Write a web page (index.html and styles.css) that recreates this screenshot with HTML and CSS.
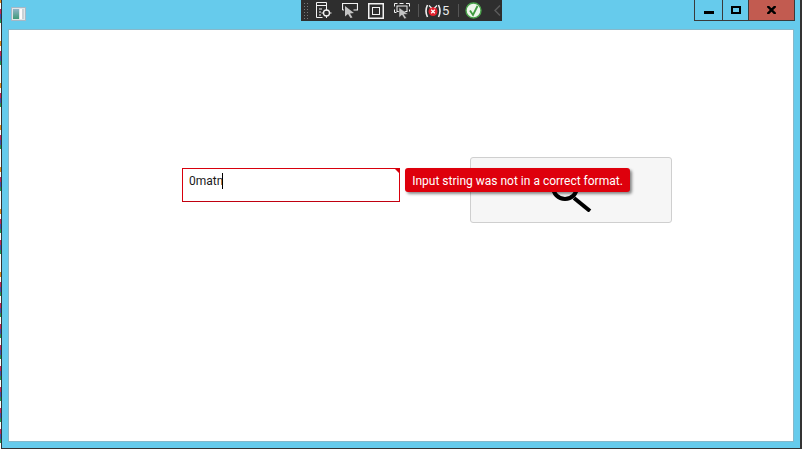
FILE: index.html
```html
<!DOCTYPE html>
<html lang="en">
<head>
<meta charset="utf-8">
<title>Validation window</title>
<link rel="stylesheet" href="styles.css">
</head>
<body>
<div class="window">
  <div class="strip">
    <i class="lead"></i>
    <i class="c"></i><i class="o"></i><i class="c"></i><i class="o"></i><i class="c"></i><i class="o"></i>
    <i class="c"></i><i class="o"></i><i class="c"></i><i class="o"></i><i class="c"></i><i class="c"></i>
    <i class="o"></i><i class="c"></i><i class="c"></i><i class="c"></i><i class="c"></i><i class="c"></i>
    <i class="c"></i><i class="c"></i><i class="c"></i>
  </div>
  <div class="frame">
    <header class="titlebar">
      <svg class="app-icon" width="15" height="14" viewBox="0 0 15 14">
        <defs>
          <linearGradient id="pane" x1="0" y1="0" x2="0" y2="1">
            <stop offset="0" stop-color="#8fb4c8"/>
            <stop offset="1" stop-color="#3f9a78"/>
          </linearGradient>
        </defs>
        <rect x="0.500" y="0.500" width="14" height="13" fill="#dfe6e8" stroke="#a5b8c6"/>
        <rect x="2" y="2" width="6" height="10" fill="url(#pane)"/>
        <rect x="9" y="2" width="2" height="10" fill="#fbfbfb"/>
        <rect x="11" y="2" width="2" height="10" fill="#c9d2d6"/>
      </svg>
      <div class="toolbar">
        <div class="grip"></div>
        <svg class="tool t1" width="16" height="17" viewBox="0 0 16 17" fill="none" stroke="#f2f2f2">
          <path d="M.5 15.500V.5h10v6M.5 15.500h6M.5 3.500h10"/>
          <path d="M3 7h3M3 10h2M3 13h2"/>
          <circle cx="10.500" cy="11" r="3" stroke-width="1.300"/>
          <path d="M10.500 6v2.500M10.500 13.500V16M5.500 11H8M13 11h2.500"/>
        </svg>
        <svg class="tool t2" width="16" height="15" viewBox="0 0 16 15" fill="none" stroke="#f2f2f2">
          <path d="M.5 7V.5h15V7h-4" stroke-width="1.200"/>
          <path d="M3 3l9 7-4 .5 2.500 4-2 .5-2.500-4-3 2.500z" fill="#c4c4c4" stroke="none"/>
          <path d="M.5 7H2"/>
        </svg>
        <svg class="tool t3" width="16" height="16" viewBox="0 0 16 16" fill="none" stroke="#f2f2f2">
          <rect x="0.750" y="0.750" width="14.500" height="14.500" stroke-width="1.500"/>
          <rect x="4.500" y="4.500" width="7" height="7"/>
        </svg>
        <svg class="tool t4" width="17" height="16" viewBox="0 0 17 16" fill="none" stroke="#f2f2f2">
          <path d="M3.500.5H.5v3M12 .5h3.500v3M.5 6.500v3h2M15.500 6.500v2M5.500 .5h4"/>
          <rect x="3" y="3" width="10" height="5.500"/>
          <path d="M5 4.500l9 6.500-4 .5 2.500 3.500-2 1-2.500-4-3 2.500z" fill="#c4c4c4" stroke="#2e2e2e" stroke-width="0.500"/>
        </svg>
        <div class="sep sep-a"></div>
        <div class="errors">
          <svg width="16" height="14" viewBox="0 0 16 14" fill="none">
            <circle cx="8" cy="7.500" r="4.500" fill="#e0202c"/>
            <path d="M6.200 5.700l3.600 3.600M9.800 5.700l-3.600 3.600" stroke="#fff" stroke-width="1.300"/>
            <path d="M2.500 1Q-.5 7 2.500 13M13.500 1Q16.500 7 13.500 13" stroke="#f0f0f0" stroke-width="1.600"/>
            <path d="M4 1.500l2.500 2.500M12 1.500L9.500 4" stroke="#f0f0f0" stroke-width="1.200"/>
          </svg>
          <span class="count">5</span>
        </div>
        <div class="sep sep-b"></div>
        <svg class="check" width="17" height="17" viewBox="0 0 17 17" fill="none">
          <circle cx="8.500" cy="8.500" r="7.500" fill="#eef6ec" stroke="#4aa24b" stroke-width="1.400"/>
          <path d="M5 8.500l3 4.500 4.500-9" stroke="#3f9a3f" stroke-width="1.800"/>
        </svg>
        <svg class="chev" width="7" height="11" viewBox="0 0 7 11" fill="none">
          <path d="M6 .5L1 5.500l5 5" stroke="#5c5c5c" stroke-width="1.400"/>
        </svg>
      </div>
      <div class="caption">
        <div class="cap-btn min"><span class="min-glyph"></span></div>
        <div class="cap-btn max"><span class="max-glyph"></span></div>
        <div class="cap-btn close">
          <svg width="9" height="8" viewBox="0 0 9 8" fill="none" stroke="#000" stroke-width="2.400">
            <path d="M.5 0l8 8M8.500 0l-8 8"/>
          </svg>
        </div>
      </div>
    </header>
    <main class="client">
      <div class="form">
        <div class="field">
          <span class="value">0matn</span><span class="caret"></span>
          <span class="corner"></span>
        </div>
        <button class="search" type="button" aria-label="Search">
          <svg width="46" height="44" viewBox="0 0 46 44" fill="none" stroke="#000" stroke-width="4">
            <circle cx="17" cy="19" r="12"/>
            <path d="M26 30l16 13"/>
          </svg>
        </button>
        <div class="tooltip">Input string was not in a correct format.</div>
      </div>
    </main>
  </div>
</div>
</body>
</html>
```
FILE: styles.css
```css
* { box-sizing: border-box; }
html, body { margin: 0; height: 100%; overflow: hidden; }
body { font-family: Roboto, "Open Sans", sans-serif; }
.window { display: flex; width: 802px; height: 449px; background: #333; }
.strip { width: 1px; flex: none; display: flex; flex-direction: column; background: #fff; overflow: hidden; }
.strip i { display: block; flex: none; height: 21px; }
.strip .lead { height: 9px; background: linear-gradient(#e08a1e 0 3px, #fff 3px); }
.strip .c { background: linear-gradient(#c4285c 0 5px, #3f4fb0 5px 10px, #1f9a55 10px 14px, #fff 14px); }
.strip .o { background: linear-gradient(#fff 0 11px, #e08a1e 11px 16px, #fff 16px); }
.frame {
  flex: 1; margin: 0 2px 1px 1px;
  background: #66cbec;
  display: flex; flex-direction: column;
  padding: 0 7px 7px 7px;
}
.titlebar { height: 30px; flex: none; display: flex; align-items: flex-start; position: relative; }
.app-icon { margin: 7px 0 0 2px; }
.toolbar {
  position: absolute; left: 292px; top: 0;
  width: 201px; height: 21px;
  background: #2e2e2e;
  display: flex; align-items: center;
  padding-left: 2px;
}
.grip {
  width: 6px; height: 17px; margin-right: 7px; flex: none;
  background-image: radial-gradient(#777 0.6px, transparent 0.8px);
  background-size: 3px 3px;
}
.tool { flex: none; margin-right: 10px; }
.t4 { margin-right: 7px; }
.sep { width: 1px; height: 13px; background: #555; flex: none; }
.errors { display: flex; align-items: center; gap: 1px; margin: 0 5px 0 6px; width: 28px; flex: none; }
.errors svg { flex: none; }
.count { color: #e8e8e8; font-size: 13px; line-height: 16px; }
.check { flex: none; margin-left: 6px; margin-right: 12px; }
.chev { flex: none; }
.caption {
  position: absolute; right: -2px; top: 0;
  display: flex; height: 21px;
  border: 1px solid #3a3a3a; border-top: 0;
}
.cap-btn { display: flex; align-items: center; justify-content: center; height: 100%; }
.min { width: 28px; border-right: 1px solid #3a3a3a; }
.max { width: 26px; border-right: 1px solid #3a3a3a; }
.close { width: 45px; background: #c25b50; }
.min-glyph { width: 10px; height: 3px; background: #000; margin-top: 5px; }
.max-glyph { width: 10px; height: 8px; border: 2px solid #000; }
.client { flex: 1; background: #fff; box-shadow: 0 0 0 1px #86b8ca; position: relative; }
.form { position: relative; height: 100%; }
.field {
  position: absolute; left: 173px; top: 138px;
  width: 218px; height: 34px;
  border: 1px solid #d8000c; border-bottom-color: #c00010;
  display: flex; align-items: flex-start;
  padding: 4px 0 0 6px;
  font-size: 12px; line-height: 16px; color: #1a1a1a;
}
.caret { width: 1px; height: 16px; background: #000; margin-left: -1px; flex: none; }
.corner {
  position: absolute; right: -1px; top: -1px;
  border-style: solid; border-width: 0 6px 6px 0;
  border-color: transparent #d8000c transparent transparent;
}
.search {
  position: absolute; left: 461px; top: 127px;
  width: 202px; height: 66px;
  background: #f6f6f6; border: 1px solid #cfcfcf; border-radius: 3px;
  padding: 0;
  display: flex; align-items: center; justify-content: center;
}
.tooltip {
  position: absolute; left: 396px; top: 138px;
  width: 225px; height: 24px;
  background: #de000c; color: #fff;
  border-radius: 3px;
  box-shadow: 2px 2px 3px rgba(0,0,0,.45);
  font-size: 12px; line-height: 26px; text-align: center;
  white-space: nowrap;
}
```
